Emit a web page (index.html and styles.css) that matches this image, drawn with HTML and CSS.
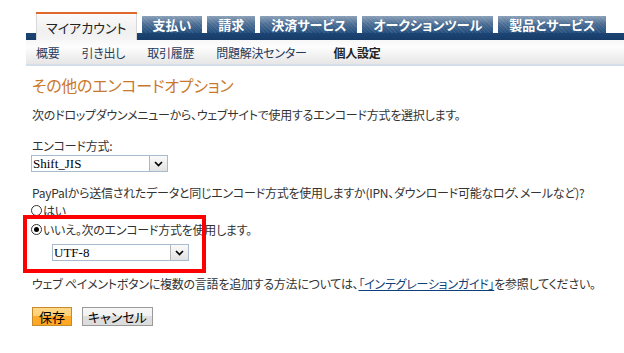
FILE: index.html
```html
<!DOCTYPE html>
<html lang="ja">
<head>
<meta charset="utf-8">
<link rel="stylesheet" href="styles.css">
</head>
<body>
<div class="header">
  <div class="tabs">
    <div class="tab active">マイアカウント</div>
    <div class="tab">支払い</div>
    <div class="tab">請求</div>
    <div class="tab">決済サービス</div>
    <div class="tab">オークションツール</div>
    <div class="tab">製品とサービス</div>
  </div>
  <div class="subnav">
    <span class="sub">概要</span>
    <span class="sub">引き出し</span>
    <span class="sub">取引履歴</span>
    <span class="sub">問題解決センター</span>
    <span class="sub current">個人設定</span>
  </div>
</div>
<div class="content">
  <h1 class="title">その他のエンコードオプション</h1>
  <p class="intro">次のドロップダウンメニューから、ウェブサイトで使用するエンコード方式を選択します。</p>
  <div class="label">エンコード方式:</div>
  <div class="select">
    <span class="select-text">Shift_JIS</span>
    <span class="select-arrow"><svg width="9" height="6" viewBox="0 0 9 6"><path d="M1 1 L4.5 4.5 L8 1" fill="none" stroke="#000" stroke-width="1.7"/></svg></span>
  </div>
  <p class="question">PayPalから送信されたデータと同じエンコード方式を使用しますか(IPN、ダウンロード可能なログ、メールなど)?</p>
  <div class="options">
    <div class="radio-row"><span class="radio"></span><span>はい</span></div>
    <div class="radio-row"><span class="radio checked"></span><span>いいえ。次のエンコード方式を使用します。</span></div>
    <div class="select inner">
      <span class="select-text">UTF-8</span>
      <span class="select-arrow"><svg width="9" height="6" viewBox="0 0 9 6"><path d="M1 1 L4.5 4.5 L8 1" fill="none" stroke="#000" stroke-width="1.7"/></svg></span>
    </div>
    <div class="highlight"></div>
  </div>
  <p class="note">ウェブ ペイメントボタンに複数の言語を追加する方法については、<a class="link" href="#">「インテグレーションガイド」</a>を参照してください。</p>
  <div class="buttons">
    <button class="btn primary">保存</button>
    <button class="btn">キャンセル</button>
  </div>
</div>
</body>
</html>
```

FILE: styles.css
```css
html, body {
  margin: 0;
  padding: 0;
  background: #fff;
}
body {
  font-family: "Noto Sans CJK JP", "Noto Sans", sans-serif;
  font-size: 12px;
  color: #333;
  font-feature-settings: "palt";
  letter-spacing: -0.25px;
}
.header {
  margin-top: 12px;
  margin-left: 26px;
}
.tabs {
  display: flex;
  align-items: flex-end;
  gap: 5px;
  height: 28px;
  padding-left: 10px;
  background: linear-gradient(to bottom, transparent 0, transparent 21px, #1d4474 21px, #173c69 28px);
}
.tab {
  flex-shrink: 0;
  white-space: nowrap;
  height: 17px;
  margin-bottom: 7px;
  padding: 0 11px;
  display: flex;
  align-items: center;
  color: #fff;
  font-weight: bold;
  font-size: 13px;
  line-height: 17px;
  letter-spacing: 0;
  background:
    repeating-linear-gradient(45deg, rgba(255,255,255,0.08) 0 1px, transparent 1px 3px),
    linear-gradient(to bottom, #8aa0b8 0, #4d6f95 45%, #224d7d 100%);
}
.tab.active {
  height: 26px;
  margin-bottom: 0;
  padding: 0 10px;
  color: #222;
  font-weight: normal;
  font-size: 13px;
  border-top: 2px solid #e0682c;
  background: linear-gradient(to bottom, #fbfbfb 0, #f0f0f0 60%, #f4f4f4 100%);
  box-shadow: inset 1px 0 0 #d8d8d8, inset -1px 0 0 #d8d8d8;
}
.subnav {
  height: 23px;
  display: flex;
  align-items: center;
  gap: 22px;
  padding-left: 10px;
  padding-top: 1px;
  background: linear-gradient(to bottom, #f7f7f7 0, #fdfdfd 30%, #e6e6e6 100%);
  border-bottom: 2px solid #d3deea;
  color: #1f3a5c;
  font-size: 12px;
}
.sub.current {
  font-weight: bold;
  color: #222;
  margin-left: 5px;
}
.content {
  position: relative;
  padding-left: 32px;
}
.title {
  margin: 9px 0 0;
  font-size: 16px;
  font-weight: normal;
  color: #c9792b;
  line-height: 20px;
}
.intro {
  margin: 13px 0 0;
  line-height: 14px;
}
.label {
  margin-top: 17px;
  line-height: 14px;
}
.select {
  margin-top: 2px;
  margin-left: -1px;
  width: 135px;
  height: 15px;
  border: 1px solid #a8bacd;
  display: flex;
  align-items: stretch;
  background: #fff;
}
.select-text {
  flex: 1;
  font-family: "Liberation Serif", serif;
  font-size: 13px;
  line-height: 15px;
  letter-spacing: 0;
  color: #000;
  padding-left: 1px;
}
.select-arrow {
  width: 17px;
  border-left: 1px solid #b5b5b5;
  background: linear-gradient(to bottom, #fafafa, #e2e2e2);
  display: flex;
  align-items: center;
  justify-content: center;
}
.question {
  margin: 14px 0 0;
  line-height: 14px;
}
.options {
  position: relative;
}
.radio-row {
  display: flex;
  align-items: center;
  gap: 1px;
  height: 16px;
  margin-top: 2px;
  margin-left: -1px;
}
.radio-row + .radio-row {
  margin-top: 3px;
}
.radio {
  width: 11px;
  height: 11px;
  border: 1px solid #333;
  border-radius: 50%;
  background: #fff;
  position: relative;
  box-sizing: border-box;
}
.radio.checked::after {
  content: "";
  position: absolute;
  left: 2px;
  top: 2px;
  width: 5px;
  height: 5px;
  border-radius: 50%;
  background: #000;
}
.select.inner {
  margin-top: 7px;
  margin-left: 20px;
}
.highlight {
  position: absolute;
  left: -9px;
  top: 13px;
  width: 175px;
  height: 50px;
  border: 4px solid #ff0000;
}
.note {
  margin: 16px 0 0;
  line-height: 14px;
}
.link {
  color: #0d3f7a;
  text-decoration: underline;
}
.buttons {
  margin-top: 16px;
  display: flex;
  gap: 10px;
}
.btn {
  font-family: "Noto Sans CJK JP", sans-serif;
  font-feature-settings: "palt";
  font-size: 13px;
  line-height: 16px;
  height: 19px;
  padding: 0 5px;
  color: #000;
  border: 1px solid #9a9a9a;
  background: linear-gradient(to bottom, #f6f6f6 0, #f1f1f1 50%, #dedede 50%, #dcdcdc 100%);
  margin: 0;
}
.btn.primary {
  border-color: #c58a2a;
  background: linear-gradient(to bottom, #ffd889 0, #ffcf70 50%, #ffaa2b 50%, #ffa623 100%);
  padding: 0 6px;
}
```
